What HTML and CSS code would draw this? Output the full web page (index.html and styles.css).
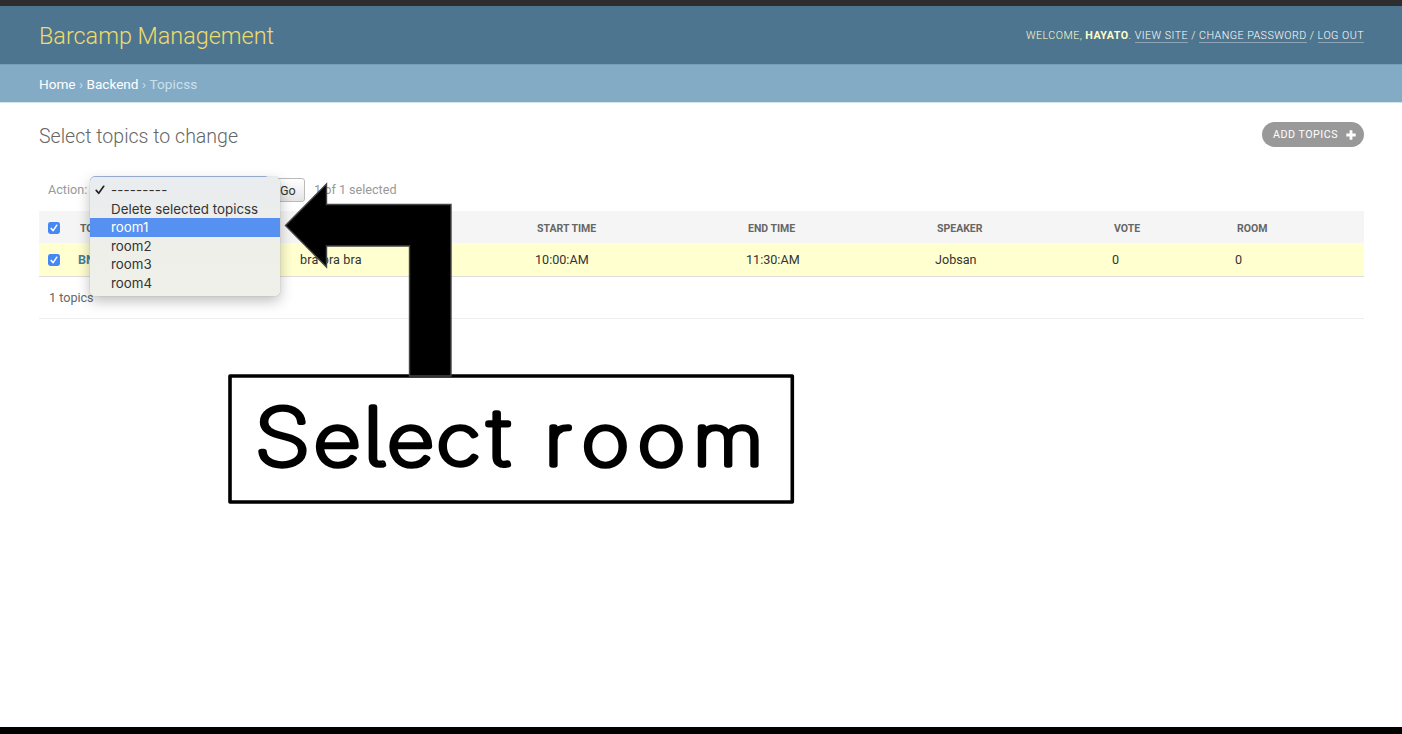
FILE: index.html
```
<!DOCTYPE html>
<html lang="en">
<head>
<meta charset="utf-8">
<title>Select topics to change</title>
<link rel="stylesheet" href="styles.css">
</head>
<body>
<div class="page">
  <header class="header">
    <h1 class="brand">Barcamp Management</h1>
    <div class="user-tools">Welcome, <strong>Hayato</strong>. <a>View site</a> / <a>Change password</a> / <a>Log out</a></div>
  </header>
  <nav class="breadcrumbs"><a>Home</a> › <a>Backend</a> › <span class="current">Topicss</span></nav>
  <main class="content">
    <div class="title-row">
      <h2 class="title">Select topics to change</h2>
      <a class="add-link">Add topics
        <svg class="plus" viewBox="0 0 10 10"><path d="M5 0.3V9.7M0.3 5H9.7" stroke="#fff" stroke-width="2.8"/></svg>
      </a>
    </div>
    <div class="actions">
      <span class="action-label">Action:</span>
      <span class="select"></span>
      <span class="go">Go</span>
      <span class="counter">1 of 1 selected</span>
      <div class="menu">
        <div class="option"><svg class="tick" viewBox="0 0 10 10"><path d="M1.2 5.4L3.7 8.3L8.7 1.3" fill="none" stroke="#222" stroke-width="1.7" stroke-linecap="round" stroke-linejoin="round"/></svg><span class="dashes">---------</span></div>
        <div class="option">Delete selected topicss</div>
        <div class="option active">room1</div>
        <div class="option">room2</div>
        <div class="option">room3</div>
        <div class="option">room4</div>
      </div>
    </div>
    <table class="results">
      <colgroup><col class="c-check"><col class="c-topic"><col class="c-detail"><col class="c-start"><col class="c-end"><col class="c-speaker"><col class="c-vote"><col class="c-room"></colgroup>
      <thead><tr>
        <th><svg class="check" viewBox="0 0 12 12"><rect width="12" height="12" rx="2.4"/><path d="M3.2 6.4L5.2 8.7L8.8 3.2"/></svg></th>
        <th>Topic</th><th></th><th>Start time</th><th>End time</th><th>Speaker</th><th>Vote</th><th>Room</th>
      </tr></thead>
      <tbody><tr>
        <td><svg class="check" viewBox="0 0 12 12"><rect width="12" height="12" rx="2.4"/><path d="M3.2 6.4L5.2 8.7L8.8 3.2"/></svg></td>
        <td class="topic">BN</td><td class="detail">bra bra bra</td><td>10:00:AM</td><td>11:30:AM</td><td>Jobsan</td><td>0</td><td>0</td>
      </tr></tbody>
    </table>
    <p class="paginator">1 topics</p>
  </main>
  <svg class="annotation" viewBox="0 0 1402 734">
    <rect x="230" y="376" width="562.3" height="126" fill="#fff" stroke="#000" stroke-width="3.6" stroke-linejoin="round"/>
    <path d="M285.5 225.5L326.5 184V204.5H451V376H409.5V246H326.5V267Z" fill="#000" stroke="#444" stroke-width="1.4"/>
    <text class="callout" transform="scale(1.17 1)" y="465" x="217.5 268.3 310.3 331.3 373.2 417 450 465.6 497.4 545.3 592.6"><tspan class="cap">S</tspan>e<tspan class="tall">l</tspan>ec<tspan class="cross">t</tspan> room</text>
  </svg>
</div>
</body>
</html>
```
FILE: styles.css
```
body { margin: 0; background: #fff; font-family: Roboto, "Liberation Sans", sans-serif; font-size: 12.6px; color: #333; }
.page { position: relative; box-sizing: border-box; width: 1402px; height: 734px; overflow: hidden; border-top: 6px solid #2d2d2d; border-bottom: 7px solid #000; }
.header { height: 58px; padding: 0 38px 0 39px; background: #4e758f; display: flex; justify-content: space-between; align-items: center; }
.brand { margin: 2px 0 0; font-size: 23.4px; font-weight: 300; color: #eedc6b; }
.user-tools { font-size: 10.7px; font-weight: 300; letter-spacing: .47px; text-transform: uppercase; color: #ffc; }
.user-tools strong { font-weight: 700; }
.user-tools a { color: #fff; border-bottom: 1px solid #8ba5b6; }
.breadcrumbs { box-sizing: border-box; height: 39px; padding: 0 39px; line-height: 38px; background: #84abc5; border-top: 1px solid #75a0ba; border-bottom: 1px solid #d5e3ec; color: #c9e1ef; font-size: 13.6px; }
.breadcrumbs a { color: #fff; }
.current { letter-spacing: .1px; }
.content { padding: 19px 38px 0 39px; }
.title-row { display: flex; justify-content: space-between; height: 49px; }
.title { margin: 1px 0 0; font-size: 19.55px; line-height: 27px; font-weight: 300; color: #666; }
.add-link { box-sizing: border-box; width: 102px; height: 25px; padding-left: 11px; display: flex; align-items: center; gap: 8px; border-radius: 13px; background: #999; color: #fff; font-size: 10.7px; letter-spacing: .5px; text-transform: uppercase; white-space: nowrap; }
.plus { width: 10px; height: 10px; }
.actions { position: relative; height: 40px; padding-left: 9px; display: flex; align-items: flex-start; color: #999; line-height: 37px; }
.action-label { width: 42px; }
.select { box-sizing: border-box; width: 180px; height: 24px; margin-top: 5px; border: 1px solid #a3b7df; border-radius: 5px; }
.go { box-sizing: border-box; width: 35px; height: 24px; margin-top: 7px; padding-left: 9px; border: 1px solid #bbb; border-radius: 3px; background: linear-gradient(#fff, #e4e4e4); color: #333; line-height: 23px; }
.counter { margin-left: 9px; }
.menu { position: absolute; z-index: 2; left: 51px; top: 6px; width: 190px; height: 119px; box-sizing: border-box; padding-top: 4px; border-radius: 5px; background: linear-gradient(#e9ecf0, #eeefe9 60%, #eff0e8); box-shadow: 0 0 1px #888, 0 5px 14px rgba(0,0,0,.26); color: #333; font-family: Inter, "Liberation Sans", sans-serif; font-size: 13.3px; line-height: 18.5px; }
.option { position: relative; height: 18.5px; padding-left: 21px; letter-spacing: .03px; }
.option.active { background: #5690f1; color: #fff; }
.dashes { letter-spacing: .15px; }
.tick { position: absolute; left: 5px; top: 4px; width: 10px; height: 10px; }
.results { width: 1325px; table-layout: fixed; border-collapse: collapse; }
.c-check { width: 31px; } .c-topic { width: 222px; } .c-detail { width: 235px; } .c-start { width: 211px; }
.c-end { width: 189px; } .c-speaker { width: 177px; } .c-vote { width: 123px; } .c-room { width: 137px; }
.results th { box-sizing: border-box; height: 32px; padding: 2px 0 0 10px; background: #f5f5f5; color: #666; font-size: 10.5px; font-weight: 700; text-align: left; text-transform: uppercase; }
.results td { box-sizing: border-box; height: 33px; padding: 1px 0 0 8px; background: #ffffd0; border-bottom: 1px solid #ddd; }
.results th:first-child, .results td:first-child { padding-left: 9px; }
.results .topic { color: #447e9b; font-weight: 700; }
.results .detail { letter-spacing: .15px; }
.check { display: block; width: 12px; height: 12px; fill: #4487f5; }
.check path { fill: none; stroke: #fff; stroke-width: 1.5; stroke-linecap: round; stroke-linejoin: round; }
.paginator { margin: 0; height: 42px; box-sizing: border-box; padding-left: 10px; line-height: 42px; color: #666; border-bottom: 1px solid #eee; }
.annotation { position: absolute; z-index: 3; left: 0; top: -6px; width: 1402px; height: 734px; }
.callout { font-family: Inter, sans-serif; font-size: 69px; font-weight: 100; font-feature-settings: "cv05" 1; fill: #000; stroke: #000; stroke-width: 5.6px; stroke-linejoin: round; }
.cap { font-size: 78px; }
.tall { font-size: 79px; }
.cross { font-size: 77px; }
```
